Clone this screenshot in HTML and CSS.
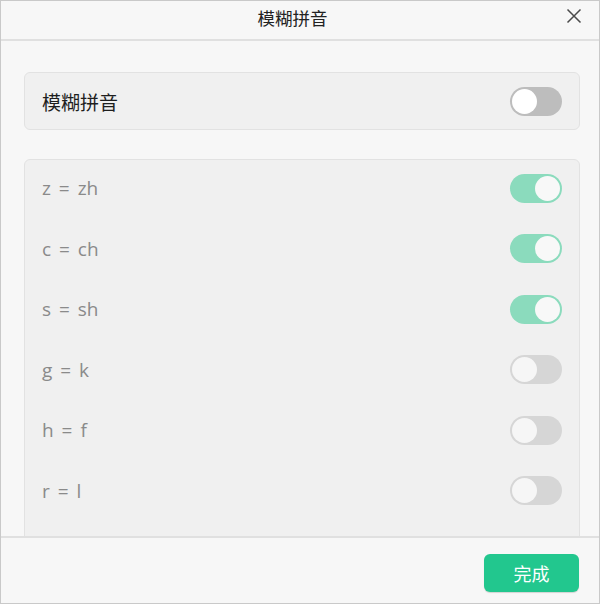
FILE: index.html
```html
<!DOCTYPE html>
<html lang="zh">
<head>
<meta charset="utf-8">
<title>模糊拼音</title>
<link rel="stylesheet" href="styles.css">
</head>
<body>
<div class="window">
  <div class="header">
    <span class="title">模糊拼音</span>
    <svg class="close" viewBox="0 0 16 16" width="16" height="16"><path d="M1.5 1.5 L14.5 14.5 M14.5 1.5 L1.5 14.5" stroke="#4a4a4a" stroke-width="1.5" fill="none"/></svg>
  </div>
  <div class="content">
    <div class="card main">
      <span class="label">模糊拼音</span>
      <span class="toggle off dark"><span class="knob"></span></span>
    </div>
    <div class="card list">
      <div class="row"><span class="label">z = zh</span><span class="toggle on"><span class="knob"></span></span></div>
      <div class="row"><span class="label">c = ch</span><span class="toggle on"><span class="knob"></span></span></div>
      <div class="row"><span class="label">s = sh</span><span class="toggle on"><span class="knob"></span></span></div>
      <div class="row"><span class="label">g = k</span><span class="toggle off"><span class="knob"></span></span></div>
      <div class="row"><span class="label">h = f</span><span class="toggle off"><span class="knob"></span></span></div>
      <div class="row"><span class="label">r = l</span><span class="toggle off"><span class="knob"></span></span></div>
    </div>
  </div>
  <div class="footer">
    <button class="done">完成</button>
  </div>
</div>
</body>
</html>
```
FILE: styles.css
```css
html, body {
  margin: 0;
  padding: 0;
  background: #f7f7f7;
}
body {
  font-family: "Noto Sans CJK SC", "Noto Sans", sans-serif;
}
.window {
  width: 600px;
  height: 604px;
  box-sizing: border-box;
  border: 1px solid #c9c9c9;
  background: #f7f7f7;
  display: flex;
  flex-direction: column;
  overflow: hidden;
}
.header {
  height: 38px;
  flex: none;
  border-bottom: 2px solid #e0e0e0;
  display: flex;
  align-items: center;
  justify-content: center;
  position: relative;
}
.title {
  font-size: 17.5px;
  color: #222;
  margin-top: -6px;
  margin-right: 15px;
}
.close {
  position: absolute;
  right: 17px;
  top: 7px;
}
.content {
  flex: 1;
  overflow: hidden;
  padding: 31px 19px 0 23px;
  display: flex;
  flex-direction: column;
  gap: 29px;
}
.card {
  background: #f0f0f0;
  border: 1px solid #e2e2e2;
  border-radius: 6px;
}
.card.main {
  height: 56px;
  display: flex;
  align-items: center;
  justify-content: space-between;
  padding: 0 17px 0 17px;
  flex: none;
}
.card.main .label {
  font-size: 19px;
  color: #1e1e1e;
}
.card.list {
  flex: none;
  padding: 0 17px;
  min-height: 420px;
}
.row {
  height: 60.5px;
  box-sizing: border-box;
  padding-bottom: 4px;
  display: flex;
  align-items: center;
  justify-content: space-between;
}
.row .label {
  font-family: "Open Sans", "Noto Sans CJK SC", sans-serif;
  font-size: 19px;
  word-spacing: 3px;
  color: #8a8a8a;
}
.toggle {
  width: 52px;
  height: 29px;
  border-radius: 15px;
  box-sizing: border-box;
  display: flex;
  align-items: center;
  padding: 2px;
}
.toggle .knob {
  width: 25px;
  height: 25px;
  border-radius: 50%;
  background: #f8f8f8;
  box-sizing: border-box;
}
.toggle.on {
  background: #8bdbbd;
  justify-content: flex-end;
}
.toggle.off {
  background: #d6d6d6;
  justify-content: flex-start;
}
.toggle.off .knob {
  background: #f6f6f6;
}
.toggle.off.dark {
  background: #bdbdbd;
}
.toggle.off.dark .knob {
  background: #ffffff;
}
.footer {
  height: 65px;
  flex: none;
  border-top: 2px solid #e0e0e0;
  display: flex;
  align-items: flex-start;
  justify-content: flex-end;
  padding: 0 20px 0 0;
}
.done {
  margin-top: 16px;
  width: 95px;
  height: 38px;
  border: none;
  border-radius: 6px;
  background: #22c78e;
  color: #ffffff;
  font-family: "Noto Sans CJK SC", sans-serif;
  font-size: 18px;
  box-shadow: 0 1px 1px rgba(0,0,0,0.15);
}
```
